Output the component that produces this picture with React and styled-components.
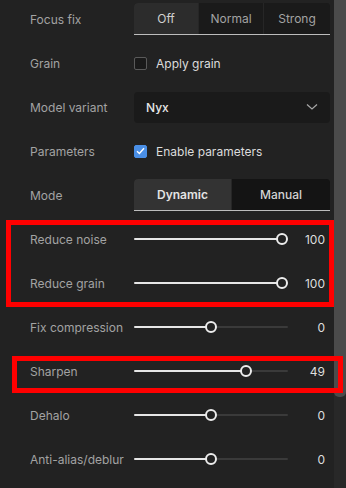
import React from 'react';
import styled, { createGlobalStyle } from 'styled-components';

const Global = createGlobalStyle`
  body {
    margin: 0;
    background: #222222;
    font-family: Inter, "Noto Sans", sans-serif;
  }
`;

const Frame = styled.div`
  position: relative;
  display: flex;
  width: 346px;
  height: 488px;
  overflow: hidden;
  background: #222222;
`;

const Panel = styled.div`
  width: 334px;
  display: flex;
  flex-direction: column;
  margin-top: -3px;
`;

const Scrollbar = styled.div`
  width: 12px;
  background: #282828;
  display: flex;
  flex-direction: column;
`;

const Thumb = styled.div`
  height: 397px;
  background: #4b4b4b;
  border-radius: 0 0 5px 5px;
`;

const Row = styled.div`
  display: grid;
  grid-template-columns: 104px 196px;
  align-items: center;
  height: 44px;
  padding-left: 30px;
`;

const Label = styled.div`
  color: #a3a3a3;
  font-size: 12px;
`;

const Segmented = styled.div`
  display: grid;
  grid-template-columns: ${(p) => p.$cols};
  height: 31px;
  border-radius: 4px 4px 0 0;
  overflow: hidden;
  border-bottom: 1px solid #bdbdbd;
  background: #1a1a1a;
`;

const Segment = styled.div`
  display: flex;
  align-items: center;
  justify-content: center;
  font-size: 12px;
  font-weight: ${(p) => p.$weight || 400};
  color: ${(p) => p.$color || (p.$active ? '#d0d0d0' : '#a3a3a3')};
  background: ${(p) => p.$bg || (p.$active ? '#2c2c2c' : '#1a1a1a')};
  & + & {
    border-left: 1px solid #262626;
  }
`;

const Check = styled.label`
  display: flex;
  align-items: center;
  gap: 9px;
  color: #dcdcdc;
  font-size: 12px;
`;

const Box = styled.span`
  width: 13px;
  height: 13px;
  box-sizing: border-box;
  border-radius: 2px;
  border: 1px solid ${(p) => (p.$on ? '#4a8fe6' : '#5a5a5a')};
  background: ${(p) => (p.$on ? '#4a8fe6' : '#1a1a1a')};
  display: flex;
  align-items: center;
  justify-content: center;
`;

const Select = styled.div`
  height: 31px;
  border-radius: 4px;
  background: #1a1a1a;
  display: flex;
  align-items: center;
  justify-content: space-between;
  padding: 0 12px;
  color: #e6e6e6;
  font-size: 12px;
  font-weight: 500;
`;

const SliderWrap = styled.div`
  display: grid;
  grid-template-columns: 154px 1fr;
  align-items: center;
`;

const Track = styled.div`
  position: relative;
  height: 2px;
  background: #3a3a3a;
  border-radius: 1px;
`;

const Fill = styled.div`
  position: absolute;
  left: 0;
  top: 0;
  height: 2px;
  background: #e6e6e6;
  border-radius: 1px;
`;

const Knob = styled.div`
  position: absolute;
  top: -5px;
  width: 8px;
  height: 8px;
  margin-left: -6px;
  border-radius: 50%;
  border: 2px solid #ececec;
  background: #222222;
`;

const Value = styled.div`
  text-align: right;
  padding-right: 5px;
  color: #dedede;
  font-size: 12px;
`;

const Highlight = styled.div`
  position: absolute;
  border: 5px solid #ff0000;
  box-sizing: border-box;
  pointer-events: none;
`;

const Slider = ({ value }) => {
  const x = 77 + (value / 100) * 71;
  return (
    <SliderWrap>
      <Track>
        <Fill style={{ width: x }} />
        <Knob style={{ left: x }} />
      </Track>
      <Value>{value}</Value>
    </SliderWrap>
  );
};

const sliders = [
  ['Reduce noise', 100],
  ['Reduce grain', 100],
  ['Fix compression', 0],
  ['Sharpen', 49],
  ['Dehalo', 0],
  ['Anti-alias/deblur', 0],
];

export default function App() {
  return (
    <Frame>
      <Global />
      <Panel>
        <Row>
          <Label>Focus fix</Label>
          <Segmented $cols="64px 65px 67px">
            <Segment $active>Off</Segment>
            <Segment>Normal</Segment>
            <Segment>Strong</Segment>
          </Segmented>
        </Row>
        <Row>
          <Label>Grain</Label>
          <Check>
            <Box />
            Apply grain
          </Check>
        </Row>
        <Row>
          <Label>Model variant</Label>
          <Select>
            Nyx
            <svg width="12" height="8" viewBox="0 0 12 8">
              <path d="M1 1.5 L6 6 L11 1.5" fill="none" stroke="#a8a8a8" strokeWidth="1.2" />
            </svg>
          </Select>
        </Row>
        <Row>
          <Label>Parameters</Label>
          <Check>
            <Box $on>
              <svg width="9" height="8" viewBox="0 0 9 8">
                <path d="M1 4.2 L3.4 6.4 L8 1.3" fill="none" stroke="#ffffff" strokeWidth="1.4" />
              </svg>
            </Box>
            Enable parameters
          </Check>
        </Row>
        <Row>
          <Label>Mode</Label>
          <Segmented $cols="97px 99px">
            <Segment $active $weight={600} $color="#e4e4e4" $bg="#333333">Dynamic</Segment>
            <Segment $weight={500} $color="#d2d2d2" $bg="#141414">Manual</Segment>
          </Segmented>
        </Row>
        {sliders.map(([name, v]) => (
          <Row key={name}>
            <Label>{name}</Label>
            <Slider value={v} />
          </Row>
        ))}
      </Panel>
      <Scrollbar>
        <Thumb />
      </Scrollbar>
      <Highlight style={{ left: 6, top: 220, width: 328, height: 87 }} />
      <Highlight style={{ left: 12, top: 356, width: 331, height: 37 }} />
    </Frame>
  );
}
